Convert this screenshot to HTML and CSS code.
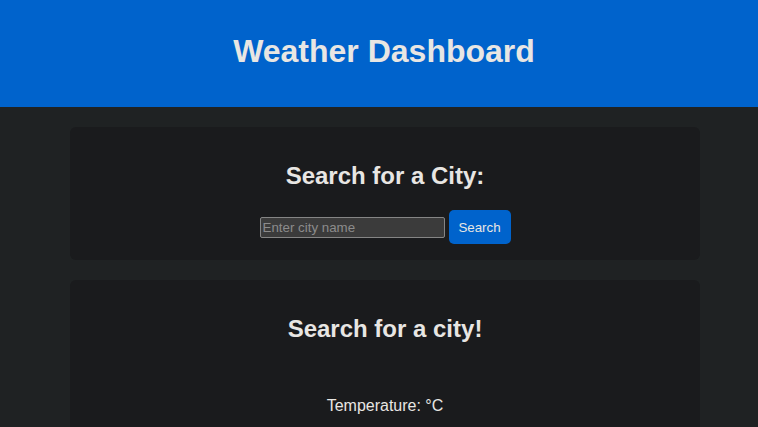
FILE: index.html
```html
<!DOCTYPE html>
<html lang="en">
<head>
<meta charset="utf-8">
<title>Weather Dashboard</title>
<link rel="stylesheet" href="styles.css">
</head>
<body>
<header class="site-header">
  <h1 class="site-title">Weather Dashboard</h1>
</header>
<main class="main">
  <section class="card search-card">
    <h2 class="card-title">Search for a City:</h2>
    <form class="search-form">
      <input class="city-input" type="text" placeholder="Enter city name">
      <button class="search-btn" type="button">Search</button>
    </form>
  </section>
  <section class="card weather-card">
    <h2 class="card-title">Search for a city!</h2>
    <div class="icon-slot"></div>
    <p class="stat">Temperature: °C</p>
  </section>
</main>
</body>
</html>
```
FILE: styles.css
```css
html, body {
  margin: 0;
  padding: 0;
}
body {
  background: #1f2223;
  color: #e8e6e3;
  font-family: "Liberation Sans", Arial, sans-serif;
  overflow: hidden;
}
.site-header {
  background: #0063cc;
  height: 107px;
  box-sizing: border-box;
  padding: 33px 0 0 10px;
  text-align: center;
}
.site-title {
  margin: 0;
  font-size: 32px;
  line-height: 37px;
  font-weight: bold;
  color: #e8e6e3;
}
.main {
  padding: 20px 0 0 12px;
  display: flex;
  flex-direction: column;
  align-items: center;
  gap: 20px;
}
.card {
  width: 630px;
  box-sizing: border-box;
  background: #1a1b1d;
  border-radius: 6px;
  padding: 15px 20px 16px;
  text-align: center;
}
.card-title {
  margin: 20px 0;
  font-size: 24px;
  line-height: 28px;
  font-weight: bold;
}
.search-form {
  display: flex;
  justify-content: center;
  align-items: center;
  gap: 4px;
}
.city-input {
  width: 185px;
  height: 21px;
  box-sizing: border-box;
  background: #3b3b3b;
  border: 1px solid #858585;
  border-radius: 2px;
  color: #e8e6e3;
  font-family: "Liberation Sans", Arial, sans-serif;
  font-size: 13.33px;
  padding: 1px 2px;
}
.city-input::placeholder {
  color: #8c8c8c;
}
.search-btn {
  width: 62px;
  height: 34px;
  padding: 0;
  background: #0063cc;
  color: #e8e6e3;
  border: none;
  border-radius: 5px;
  font-family: "Liberation Sans", Arial, sans-serif;
  font-size: 13.33px;
}
.icon-slot {
  height: 18px;
}
.stat {
  margin: 16px 0;
  font-size: 16px;
  line-height: 18px;
}
```
